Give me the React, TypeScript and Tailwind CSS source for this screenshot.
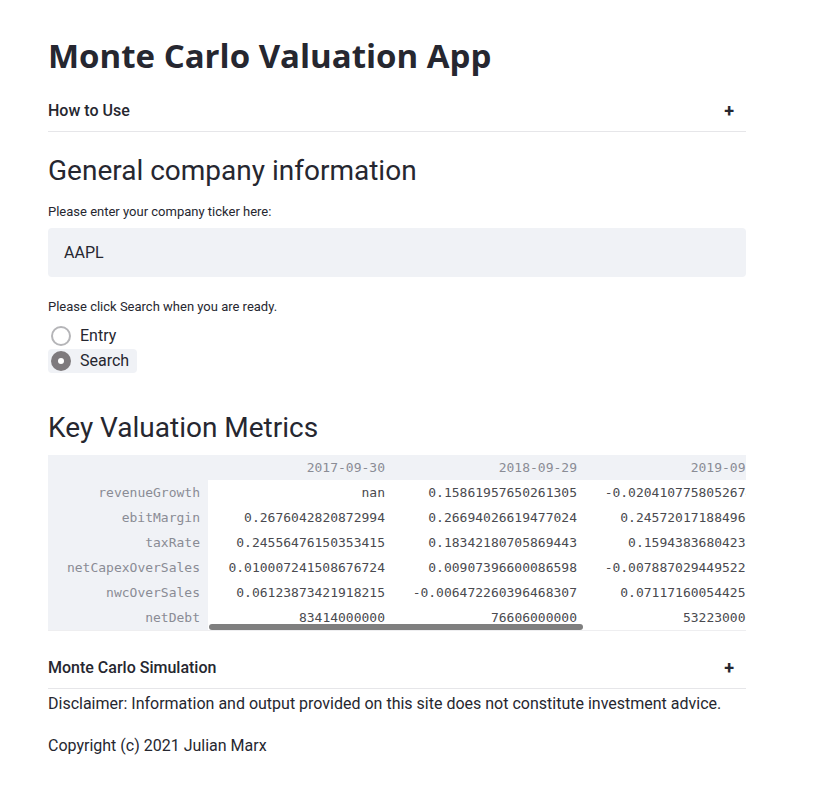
import React from "react";

const sans = { fontFamily: "Roboto, 'Liberation Sans', sans-serif" };
const titleFont = { fontFamily: "'Open Sans', Roboto, sans-serif" };
const mono = { fontFamily: "'DejaVu Sans Mono', 'Liberation Mono', monospace" };

const cols = ["2017-09-30", "2018-09-29", "2019-09-28"];
const rows: [string, string, string, string][] = [
  ["revenueGrowth", "nan", "0.15861957650261305", "-0.020410775805267454"],
  ["ebitMargin", "0.2676042820872994", "0.26694026619477024", "0.24572017188496603"],
  ["taxRate", "0.24556476150353415", "0.18342180705869443", "0.1594383680423346"],
  ["netCapexOverSales", "0.010007241508676724", "0.00907396600086598", "-0.007887029449522108"],
  ["nwcOverSales", "0.06123873421918215", "-0.006472260396468307", "0.07117160054425763"],
  ["netDebt", "83414000000", "76606000000", "53223000000"],
];

function Expander({ title }: { title: string }) {
  return (
    <div className="flex h-[41px] items-center justify-between border-b border-[#e6e6e9] text-[16px] font-medium text-[#262730]">
      <span>{title}</span>
      <span className="mr-[12px] text-[18px] font-bold leading-none">+</span>
    </div>
  );
}

export default function App() {
  return (
    <div className="min-h-[795px] bg-white text-[#262730]" style={sans}>
      <div className="ml-[48px] w-[698px] pt-[36px]">
        <h1 className="h-[40px] text-[33px] font-bold leading-[40px]" style={titleFont}>
          Monte Carlo Valuation App
        </h1>
        <div className="mt-[15px]">
          <Expander title="How to Use" />
        </div>
        <h2 className="mt-[19px] h-[40px] text-[28px] font-normal leading-[40px]">General company information</h2>
        <div className="mt-[12px] h-[18px] text-[13px] leading-[18px]">Please enter your company ticker here:</div>
        <div className="mt-[7px] flex h-[49px] items-center rounded-[4px] bg-[#f0f2f6] pl-[16px] text-[16px]">AAPL</div>
        <div className="mt-[21px] h-[18px] text-[13px] leading-[18px]">Please click Search when you are ready.</div>
        <div className="mt-[8px] flex h-[24px] items-center">
          <span className="ml-[3px] h-[20px] w-[20px] rounded-full border-2 border-[#b5b5b8]" />
          <span className="ml-[9px] text-[16px]">Entry</span>
        </div>
        <div className="mt-[1px] flex h-[24px] w-[89px] items-center rounded-[4px] bg-[#f0f2f6]">
          <span className="ml-[3px] flex h-[20px] w-[20px] items-center justify-center rounded-full bg-[#7e7a7d]">
            <span className="h-[6px] w-[6px] rounded-full bg-white" />
          </span>
          <span className="ml-[9px] text-[16px]">Search</span>
        </div>
        <h2 className="mt-[35px] h-[40px] text-[28px] font-normal leading-[40px]">Key Valuation Metrics</h2>
        <div className="relative mt-[7px] overflow-hidden text-[13px]" style={mono}>
          <div className="flex h-[25px] items-center bg-[#f0f2f6] text-[#8a8c95]">
            <div className="w-[160px] shrink-0" />
            {cols.map((c, i) => (
              <div key={c} className={`${i === 0 ? "w-[185px]" : "w-[192px]"} shrink-0 whitespace-nowrap pr-[8px] text-right`}>
                {c}
              </div>
            ))}
          </div>
          {rows.map((r) => (
            <div key={r[0]} className="flex h-[25px] items-center">
              <div className="flex h-full w-[160px] shrink-0 items-center justify-end bg-[#f0f2f6] pr-[8px] text-[#8a8c95]">{r[0]}</div>
              <div className="w-[185px] shrink-0 whitespace-nowrap pr-[8px] text-right text-[#4a4a4f]">{r[1]}</div>
              <div className="w-[192px] shrink-0 whitespace-nowrap pr-[8px] text-right text-[#4a4a4f]">{r[2]}</div>
              <div className="w-[192px] shrink-0 whitespace-nowrap pr-[8px] text-right text-[#4a4a4f]">{r[3]}</div>
            </div>
          ))}
          <div className="h-[1px] bg-[#eeeef0]" />
          <div className="absolute bottom-[1px] left-[161px] h-[6px] w-[374px] rounded-full bg-[#7f7f7f]" />
        </div>
        <div className="mt-[17px]">
          <Expander title="Monte Carlo Simulation" />
        </div>
        <div className="mt-[5px] h-[20px] text-[16px] leading-[20px]">
          Disclaimer: Information and output provided on this site does not constitute investment advice.
        </div>
        <div className="mt-[22px] h-[20px] text-[16px] leading-[20px]">Copyright (c) 2021 Julian Marx</div>
      </div>
    </div>
  );
}
